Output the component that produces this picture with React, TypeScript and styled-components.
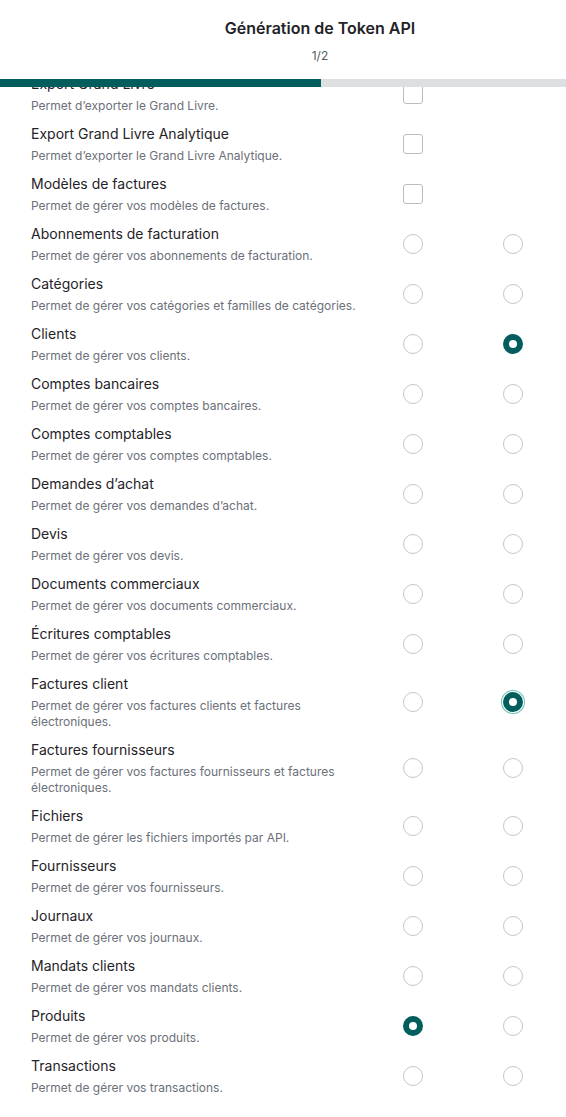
import styled, {createGlobalStyle, css} from "styled-components";

const GlobalStyle = createGlobalStyle`
  body {
    margin: 0;
    background: #ffffff;
    font-family: Inter, "Noto Sans", sans-serif;
    color: #1f2328;
  }
`;

const StyledPage = styled.div`
  width: 566px;
  height: 1117px;
  overflow: hidden;
  background: #ffffff;
`;

const StyledHeader = styled.div`
  display: flex;
  flex-direction: column;
  align-items: center;
  box-sizing: border-box;
  height: 79px;
  padding: 16px 0 0 74px;
`;

const StyledTitle = styled.h1`
  margin: 0;
  font-size: 16px;
  line-height: 24px;
  font-weight: 600;
  color: #1f2328;
`;

const StyledStep = styled.div`
  margin-top: 8px;
  font-size: 12px;
  line-height: 16px;
  color: #555b63;
`;

const StyledProgress = styled.div`
  height: 8px;
  background: #dedfe0;
`;

const StyledProgressFill = styled.div`
  height: 100%;
  background: #015e5c;
`;

const StyledViewport = styled.div`
  overflow: hidden;
`;

const StyledList = styled.div`
  margin-top: -18px;
`;

const StyledRow = styled.div`
  display: grid;
  grid-template-columns: 1fr 100px 100px;
  align-items: center;
  padding: 5px 3px 5px 31px;
`;

const StyledText = styled.div`
  display: flex;
  flex-direction: column;
  gap: 4px;
`;

const StyledLabel = styled.div`
  font-size: 14px;
  line-height: 20px;
  color: #1f2328;
`;

const StyledDescription = styled.div`
  font-size: 12px;
  line-height: 16px;
  color: #6b7079;
`;

const StyledCell = styled.div`
  display: flex;
  justify-content: center;
`;

const StyledCheckbox = styled.span`
  width: 20px;
  height: 20px;
  box-sizing: border-box;
  border: 1px solid #b9bdc4;
  border-radius: 3px;
`;

const StyledRadio = styled.span<{ $checked?: boolean, $focused?: boolean }>`
  width: 20px;
  height: 20px;
  box-sizing: border-box;
  border-radius: 50%;
  border: 1px solid #c3c7ce;
  background: #ffffff;
  ${props => props.$checked && css`
    border: 6px solid #015e5c;`
  }
  ${props => props.$focused && css`
    box-shadow: 0 0 0 1px #ffffff, 0 0 0 2px #6cc3b9;`
  }
`;

type Row = {
    label: string;
    description: string;
    type: "check" | "radio";
    read?: boolean;
    write?: boolean;
    focused?: boolean;
};

const rows: Row[] = [
    {label: "Export Grand Livre", description: "Permet d’exporter le Grand Livre.", type: "check"},
    {label: "Export Grand Livre Analytique", description: "Permet d’exporter le Grand Livre Analytique.", type: "check"},
    {label: "Modèles de factures", description: "Permet de gérer vos modèles de factures.", type: "check"},
    {label: "Abonnements de facturation", description: "Permet de gérer vos abonnements de facturation.", type: "radio"},
    {label: "Catégories", description: "Permet de gérer vos catégories et familles de catégories.", type: "radio"},
    {label: "Clients", description: "Permet de gérer vos clients.", type: "radio", write: true},
    {label: "Comptes bancaires", description: "Permet de gérer vos comptes bancaires.", type: "radio"},
    {label: "Comptes comptables", description: "Permet de gérer vos comptes comptables.", type: "radio"},
    {label: "Demandes d’achat", description: "Permet de gérer vos demandes d’achat.", type: "radio"},
    {label: "Devis", description: "Permet de gérer vos devis.", type: "radio"},
    {label: "Documents commerciaux", description: "Permet de gérer vos documents commerciaux.", type: "radio"},
    {label: "Écritures comptables", description: "Permet de gérer vos écritures comptables.", type: "radio"},
    {label: "Factures client", description: "Permet de gérer vos factures clients et factures électroniques.", type: "radio", write: true, focused: true},
    {label: "Factures fournisseurs", description: "Permet de gérer vos factures fournisseurs et factures électroniques.", type: "radio"},
    {label: "Fichiers", description: "Permet de gérer les fichiers importés par API.", type: "radio"},
    {label: "Fournisseurs", description: "Permet de gérer vos fournisseurs.", type: "radio"},
    {label: "Journaux", description: "Permet de gérer vos journaux.", type: "radio"},
    {label: "Mandats clients", description: "Permet de gérer vos mandats clients.", type: "radio"},
    {label: "Produits", description: "Permet de gérer vos produits.", type: "radio", read: true},
    {label: "Transactions", description: "Permet de gérer vos transactions.", type: "radio"},
];

export default function App() {
    const progress = 321;

    return (
        <StyledPage>
            <GlobalStyle/>
            <StyledHeader>
                <StyledTitle>Génération de Token API</StyledTitle>
                <StyledStep>1/2</StyledStep>
            </StyledHeader>
            <StyledProgress>
                <StyledProgressFill style={{width: progress}}/>
            </StyledProgress>
            <StyledViewport>
                <StyledList>
                    {rows.map(row => (
                        <StyledRow key={row.label}>
                            <StyledText>
                                <StyledLabel>{row.label}</StyledLabel>
                                <StyledDescription>{row.description}</StyledDescription>
                            </StyledText>
                            <StyledCell>
                                {row.type === "check"
                                    ? <StyledCheckbox/>
                                    : <StyledRadio $checked={row.read}/>}
                            </StyledCell>
                            <StyledCell>
                                {row.type === "radio" &&
                                    <StyledRadio $checked={row.write} $focused={row.focused}/>}
                            </StyledCell>
                        </StyledRow>
                    ))}
                </StyledList>
            </StyledViewport>
        </StyledPage>
    )
}
